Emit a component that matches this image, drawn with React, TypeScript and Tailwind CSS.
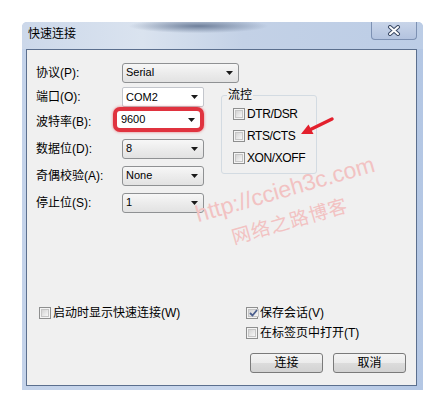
import type { FC, ReactNode } from "react";

const Arrow: FC = () => (
	<svg width="7" height="4" viewBox="0 0 7 4" className="shrink-0">
		<path d="M0 0 H7 L3.5 4 Z" fill="#1a1a1a" />
	</svg>
);

const Select: FC<{ value: string; width: string; white?: boolean }> = ({ value, width, white }) => (
	<div
		className={
			white
				? `${width} h-[20px] flex items-center justify-between pl-[3px] pr-[5px] border border-[#c3c6cc] rounded-[2px] bg-white`
				: `${width} h-[20px] flex items-center justify-between pl-[3px] pr-[5px] border border-[#8f9193] rounded-[3px] bg-[linear-gradient(#f7f7f7,#ececec_50%,#e2e2e2)]`
		}
	>
		<span className="text-[11px] leading-none text-black">{value}</span>
		<Arrow />
	</div>
);

const Check: FC<{ checked?: boolean }> = ({ checked }) => (
	<span className="w-[12px] h-[12px] shrink-0 border border-[#8e8f8f] bg-[#f4f4f4] p-[1px] flex">
		<span className="flex-1 flex items-center justify-center border border-[#c6c6c6] bg-[linear-gradient(135deg,#d4d4d4,#f7f7f7)]">
			{checked && (
				<svg width="9" height="8" viewBox="0 0 9 8">
					<path d="M1 4 L3.5 6.5 L8 1" fill="none" stroke="#4b5f8e" strokeWidth="1.8" />
				</svg>
			)}
		</span>
	</span>
);

const CheckRow: FC<{ label: string; checked?: boolean; className?: string }> = ({ label, checked, className }) => (
	<div className={`flex items-center gap-[2px] ${className ?? ""}`}>
		<Check checked={checked} />
		<span className="text-[12px] leading-none text-black">{label}</span>
	</div>
);

const Row: FC<{ label: string; h: string; children: ReactNode }> = ({ label, h, children }) => (
	<div className={`flex items-center ${h}`}>
		<span className="w-[86px] text-[12px] leading-none text-black">{label}</span>
		{children}
	</div>
);

const Button: FC<{ label: string }> = ({ label }) => (
	<button className="w-[73px] h-[20px] border border-[#7a7a7a] rounded-[3px] bg-[linear-gradient(#f4f4f4,#ebebeb_50%,#dcdcdc_50%,#d2d2d2)] text-[12px] leading-none text-black">
		{label}
	</button>
);

export default function App() {
	return (
		<div className="w-[445px] h-[406px] bg-white overflow-hidden pt-[22px] pl-[22px] font-['Liberation_Sans','Noto_Sans_CJK_SC',sans-serif]">
			<div className="w-[401px] h-[368px] flex flex-col rounded-t-[5px] pl-[4px] pr-[6px] pb-[4px] bg-[linear-gradient(90deg,#c4d3ea,#c9d7ed_50%,#b4c7e4)]">
				{/* title bar */}
				<div className="h-[27px] -ml-[4px] -mr-[6px] pl-[6px] pr-[6px] flex items-start justify-between rounded-t-[5px] bg-[radial-gradient(ellipse_at_44%_15%,#6f809b_0%,transparent_22%),linear-gradient(90deg,#ccd8ea_0%,#dae3ef_30%,#c3d1e6_55%,#bccde6_100%)]">
					<span className="mt-[5px] text-[12px] leading-[14px] text-black">快速连接</span>
					<div className="w-[46px] h-[18px] flex items-center justify-center border border-t-0 border-[#7d91b3] rounded-b-[4px] bg-[linear-gradient(#c9d5e9,#b3c3df)]">
						<svg width="14" height="11" viewBox="0 0 14 11">
							<path d="M3 2 L11 9 M11 2 L3 9" stroke="#3b4a66" strokeWidth="4" strokeLinecap="round" />
							<path d="M3 2 L11 9 M11 2 L3 9" stroke="#ffffff" strokeWidth="2" strokeLinecap="round" />
						</svg>
					</div>
				</div>

				{/* content */}
				<div className="relative flex-1 flex flex-col border border-[#5b6f8e] bg-[#f0f0f0] pl-[9px] pr-[10px] pt-[10px] pb-[12px]">
					<Row label="协议(P):" h="h-[25px]">
						<Select value="Serial" width="w-[117px]" />
					</Row>
					<div className="flex items-start">
						<div className="w-[168px] flex flex-col">
							<Row label="端口(O):" h="h-[24px]">
								<Select value="COM2" width="w-[82px]" white />
							</Row>
							<Row label="波特率(B):" h="h-[26px]">
								<div className="-ml-[7px] mb-[5px] w-[93px] h-[25px] flex items-center justify-between pl-[4px] pr-[5px] border-[4px] border-[#e0333f] rounded-[7px] bg-white shadow-[0_0_3px_rgba(220,40,50,0.6)]">
									<span className="text-[11px] leading-none text-black">9600</span>
									<Arrow />
								</div>
							</Row>
							<Row label="数据位(D):" h="h-[27px]">
								<Select value="8" width="w-[82px]" />
							</Row>
							<Row label="奇偶校验(A):" h="h-[27px]">
								<Select value="None" width="w-[82px]" />
							</Row>
							<Row label="停止位(S):" h="h-[27px]">
								<Select value="1" width="w-[82px]" />
							</Row>
						</div>
						<fieldset className="ml-[17px] mt-[3px] w-[96px] border border-[#d3dbe2] rounded-[3px] pl-[5px] pb-[4px]">
							<legend className="px-[1px] text-[12px] leading-[15px] text-black">流控</legend>
							<CheckRow label="DTR/DSR" className="h-[22px] pl-[6px] tracking-[-0.4px]" />
							<CheckRow label="RTS/CTS" className="h-[22px] pl-[6px] tracking-[-0.4px]" />
							<CheckRow label="XON/XOFF" className="h-[22px] pl-[6px] tracking-[-0.4px]" />
						</fieldset>
					</div>

					<div className="mt-auto flex items-start justify-between">
						<CheckRow label="启动时显示快速连接(W)" className="h-[20px] pl-[3px]" />
						<div className="w-[160px] flex flex-col">
							<CheckRow label="保存会话(V)" checked className="h-[20px]" />
							<CheckRow label="在标签页中打开(T)" className="h-[20px]" />
							<div className="mt-[10px] flex justify-end gap-[10px]">
								<Button label="连接" />
								<Button label="取消" />
							</div>
						</div>
					</div>

					{/* watermark */}
					<span className="absolute left-[163px] top-[125px] w-[190px] text-center text-[23px] leading-[28px] text-[#f2c2c2] rotate-[-16deg] pointer-events-none">
						http://ccieh3c.com
					</span>
					<span className="absolute left-[203px] top-[160px] w-[120px] text-center text-[19px] leading-[24px] tracking-[1px] text-[#f2c2c2] rotate-[-16deg] pointer-events-none">
						网络之路博客
					</span>

					{/* red arrow */}
					<svg className="absolute left-[270px] top-[62px]" width="42" height="28" viewBox="0 0 42 28">
						<path d="M35 7 L14 17.3" stroke="#e3202d" strokeWidth="3.5" strokeLinecap="round" />
						<path d="M4 22 L16.5 22 L11.5 12.5 Z" fill="#e3202d" />
					</svg>
				</div>
			</div>
		</div>
	);
}
